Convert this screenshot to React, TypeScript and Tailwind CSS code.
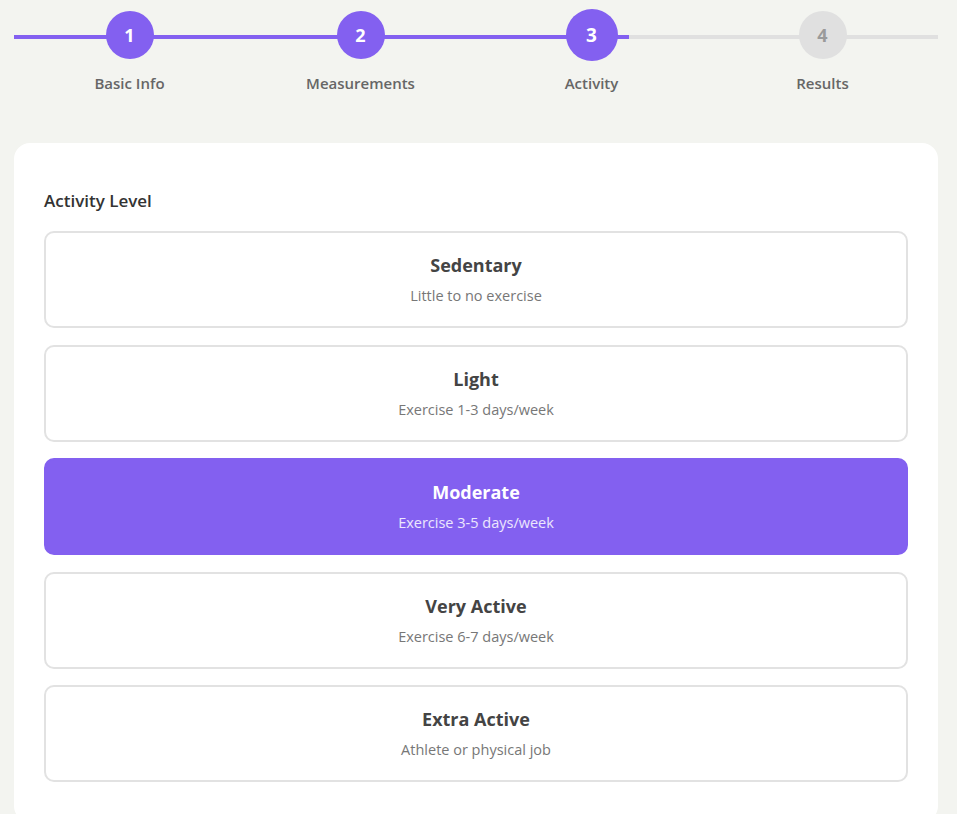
const steps = [
  { n: 1, label: "Basic Info" },
  { n: 2, label: "Measurements" },
  { n: 3, label: "Activity" },
  { n: 4, label: "Results" },
];

const levels = [
  { title: "Sedentary", desc: "Little to no exercise" },
  { title: "Light", desc: "Exercise 1-3 days/week" },
  { title: "Moderate", desc: "Exercise 3-5 days/week" },
  { title: "Very Active", desc: "Exercise 6-7 days/week" },
  { title: "Extra Active", desc: "Athlete or physical job" },
];

const current = 3;
const selected = "Moderate";

export default function App() {
  return (
    <div
      className="min-h-[814px] bg-[#f3f4f0] pl-[14px] pt-[9px]"
      style={{ fontFamily: '"Open Sans", "Noto Sans", sans-serif' }}
    >
      <div className="w-[924px]">
        {/* Stepper */}
        <div className="relative">
          <div className="absolute left-0 right-0 top-[26px] h-[4px] bg-[#e0e0e0]" />
          <div className="absolute left-0 top-[26px] h-[4px] w-[615px] bg-[#8360f0]" />
          <div className="relative grid grid-cols-4">
            {steps.map((s) => {
              const done = s.n <= current;
              const active = s.n === current;
              return (
                <div key={s.n} className="flex flex-col items-center">
                  <div className="flex h-[52px] items-center justify-center">
                    <div
                      className={
                        active
                          ? "flex h-[52px] w-[52px] items-center justify-center rounded-full bg-[#8360f0] text-[19px] font-bold text-white"
                          : done
                          ? "flex h-[48px] w-[48px] items-center justify-center rounded-full bg-[#8360f0] text-[18px] font-bold text-white"
                          : "flex h-[48px] w-[48px] items-center justify-center rounded-full bg-[#e0e0e0] text-[18px] font-bold text-[#9a9a9a]"
                      }
                    >
                      {s.n}
                    </div>
                  </div>
                  <div className="mt-[12px] text-[15px] font-semibold leading-5 text-[#666]">
                    {s.label}
                  </div>
                </div>
              );
            })}
          </div>
        </div>

        {/* Card */}
        <div className="mt-[50px] rounded-[16px] bg-white px-[30px] pb-[40px] pt-[46px]">
          <div className="mb-[18px] text-[17px] font-semibold leading-6 text-[#333]">
            Activity Level
          </div>
          <div className="flex flex-col gap-[16.5px]">
            {levels.map((l) =>
              l.title === selected ? (
                <div
                  key={l.title}
                  className="flex h-[97px] flex-col items-center justify-center rounded-[10px] border-2 border-[#8360f0] bg-[#8360f0]"
                >
                  <div className="text-[18px] font-bold leading-6 text-white">{l.title}</div>
                  <div className="mt-[9px] text-[14.5px] leading-5 text-white/85">{l.desc}</div>
                </div>
              ) : (
                <div
                  key={l.title}
                  className="flex h-[97px] flex-col items-center justify-center rounded-[10px] border-2 border-[#e2e2e2] bg-white"
                >
                  <div className="text-[18px] font-bold leading-6 text-[#444]">{l.title}</div>
                  <div className="mt-[9px] text-[14.5px] leading-5 text-[#777]">{l.desc}</div>
                </div>
              )
            )}
          </div>
        </div>
      </div>
    </div>
  );
}
